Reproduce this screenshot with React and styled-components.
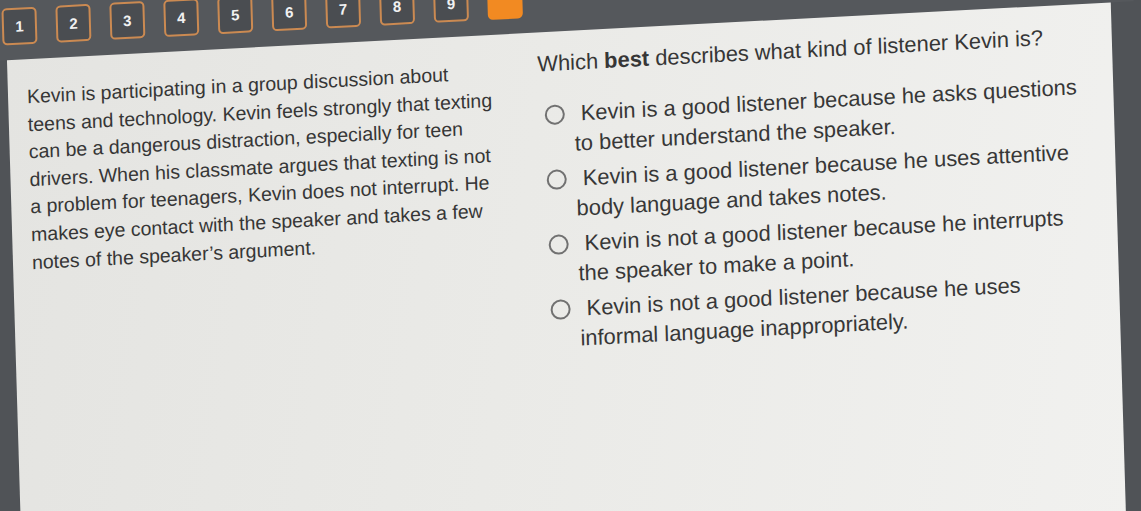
import styled, { createGlobalStyle } from "styled-components";

const passage = [
  "Kevin is participating in a group discussion about",
  "teens and technology. Kevin feels strongly that texting",
  "can be a dangerous distraction, especially for teen",
  "drivers. When his classmate argues that texting is not",
  "a problem for teenagers, Kevin does not interrupt. He",
  "makes eye contact with the speaker and takes a few",
  "notes of the speaker\u2019s argument.",
];

const options = [
  ["Kevin is a good listener because he asks questions", "to better understand the speaker."],
  ["Kevin is a good listener because he uses attentive", "body language and takes notes."],
  ["Kevin is not a good listener because he interrupts", "the speaker to make a point."],
  ["Kevin is not a good listener because he uses", "informal language inappropriately."],
];

const tabs = [1, 2, 3, 4, 5, 6, 7, 8, 9];

export default function App() {
  return (
    <>
      <GlobalStyle />
      <Screen>
        <Toolbar>
          {tabs.map((n) => (
            <TabButton key={n}>{n}</TabButton>
          ))}
          <TabButton $active aria-label="next" />
        </Toolbar>
        <Panel>
          <Passage>
            {passage.map((line) => (
              <Line key={line}>{line}</Line>
            ))}
          </Passage>
          <QuestionColumn>
            <Question>
              Which <b>best</b> describes what kind of listener Kevin is?
            </Question>
            <Options>
              {options.map((lines) => (
                <Option key={lines[0]}>
                  <Radio />
                  <OptionText>
                    {lines.map((l) => (
                      <Line key={l}>{l}</Line>
                    ))}
                  </OptionText>
                </Option>
              ))}
            </Options>
          </QuestionColumn>
        </Panel>
      </Screen>
    </>
  );
}

const GlobalStyle = createGlobalStyle`
  html, body {
    margin: 0;
    padding: 0;
    background: #505357;
    overflow: hidden;
  }
  body {
    font-family: "Liberation Sans", Arial, sans-serif;
  }
`;

// the reference is a photo of a tilted monitor, so the whole screen is tilted
const Screen = styled.div`
  width: 1141px;
  height: 640px;
  margin-top: -40px;
  display: flex;
  flex-direction: column;
  transform: rotate(-1.7deg) skewY(-1.3deg);
  transform-origin: 570px 295px;
`;

const Toolbar = styled.div`
  height: 71px;
  box-sizing: border-box;
  padding: 19px 0 0 9px;
  display: flex;
  gap: 19px;
  background: #55585c;
`;

const TabButton = styled.button`
  width: 35px;
  height: 37px;
  padding: 0;
  box-sizing: border-box;
  border-radius: 5px;
  border: 2px solid ${(p) => (p.$active ? "#f28a22" : "#cb8a52")};
  background: ${(p) => (p.$active ? "#f28a22" : "#4a4d51")};
  color: #f1f1f1;
  font-family: "Liberation Sans", Arial, sans-serif;
  font-size: 15px;
  font-weight: 700;
  display: flex;
  align-items: center;
  justify-content: center;
`;

const Panel = styled.main`
  flex: 1;
  margin: 0 23px 0 13px;
  padding: 18px 0 0 19px;
  display: grid;
  grid-template-columns: 511px 1fr;
  align-items: start;
  background: linear-gradient(100deg, #e4e4e1 0%, #eaeae7 45%, #f1f1ef 100%);
`;

const Passage = styled.section`
  padding-top: 6px;
  font-size: 19.5px;
  line-height: 27.6px;
  color: #363636;
`;

const Line = styled.span`
  display: block;
  white-space: nowrap;
`;

const QuestionColumn = styled.section`
  display: flex;
  flex-direction: column;
`;

const Question = styled.p`
  margin: 0;
  font-size: 21.9px;
  line-height: 28px;
  color: #363636;
  white-space: nowrap;
  b {
    font-weight: 700;
  }
`;

const Options = styled.div`
  margin-top: 22px;
  display: flex;
  flex-direction: column;
  gap: 5px;
`;

const Option = styled.label`
  display: flex;
  align-items: flex-start;
  gap: 9px;
  padding-left: 6px;
`;

const Radio = styled.span`
  width: 20px;
  height: 20px;
  margin-top: 5px;
  flex: none;
  box-sizing: border-box;
  border: 2px solid #717171;
  border-radius: 50%;
`;

const OptionText = styled.div`
  font-size: 21.9px;
  line-height: 30px;
  color: #373737;
  span:first-child {
    text-indent: 7px;
  }
`;
